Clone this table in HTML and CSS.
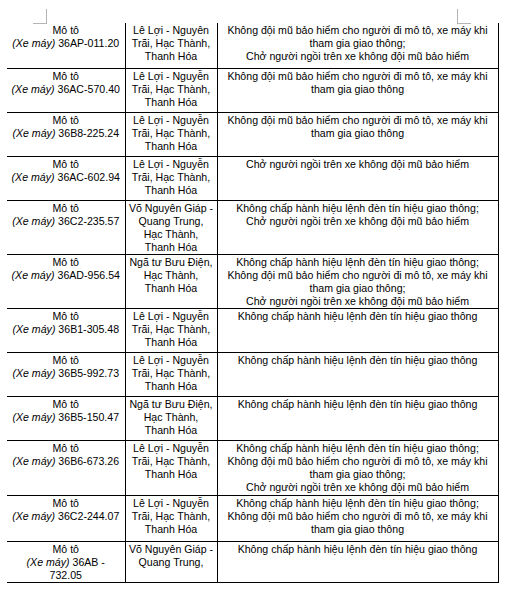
FILE: index.html
```html
<!DOCTYPE html>
<html lang="vi">
<head>
<meta charset="utf-8">
<title>Bảng vi phạm</title>
<link rel="stylesheet" href="styles.css">
</head>
<body>
<div class="page">
  <span class="crop crop-left"></span>
  <span class="crop crop-right"></span>
  <table class="grid">
    <colgroup><col class="c1"><col class="c2"><col class="c3"></colgroup>
    <tr class="r45">
      <td>Mô tô<br><i>(Xe máy)</i> 36AP-011.20</td>
      <td>Lê Lợi - Nguyên<br>Trãi, Hạc Thành,<br>Thanh Hóa</td>
      <td>Không đội mũ bảo hiểm cho người đi mô tô, xe máy khi<br>tham gia giao thông;<br>Chở người ngồi trên xe không đội mũ bảo hiểm</td>
    </tr>
    <tr class="r44">
      <td>Mô tô<br><i>(Xe máy)</i> 36AC-570.40</td>
      <td>Lê Lợi - Nguyễn<br>Trãi, Hạc Thành,<br>Thanh Hóa</td>
      <td>Không đội mũ bảo hiểm cho người đi mô tô, xe máy khi<br>tham gia giao thông</td>
    </tr>
    <tr class="r44">
      <td>Mô tô<br><i>(Xe máy)</i> 36B8-225.24</td>
      <td>Lê Lợi - Nguyễn<br>Trãi, Hạc Thành,<br>Thanh Hóa</td>
      <td>Không đội mũ bảo hiểm cho người đi mô tô, xe máy khi<br>tham gia giao thông</td>
    </tr>
    <tr class="r44">
      <td>Mô tô<br><i>(Xe máy)</i> 36AC-602.94</td>
      <td>Lê Lợi - Nguyễn<br>Trãi, Hạc Thành,<br>Thanh Hóa</td>
      <td>Chở người ngồi trên xe không đội mũ bảo hiểm</td>
    </tr>
    <tr class="r53">
      <td>Mô tô<br><i>(Xe máy)</i> 36C2-235.57</td>
      <td>Võ Nguyên Giáp -<br>Quang Trung,<br>Hạc Thành,<br>Thanh Hóa</td>
      <td>Không chấp hành hiệu lệnh đèn tín hiệu giao thông;<br>Chở người ngồi trên xe không đội mũ bảo hiểm</td>
    </tr>
    <tr class="r54">
      <td>Mô tô<br><i>(Xe máy)</i> 36AD-956.54</td>
      <td>Ngã tư Bưu Điện,<br>Hạc Thành,<br>Thanh Hóa</td>
      <td>Không chấp hành hiệu lệnh đèn tín hiệu giao thông;<br>Không đội mũ bảo hiểm cho người đi mô tô, xe máy khi<br>tham gia giao thông;<br>Chở người ngồi trên xe không đội mũ bảo hiểm</td>
    </tr>
    <tr class="r44">
      <td>Mô tô<br><i>(Xe máy)</i> 36B1-305.48</td>
      <td>Lê Lợi - Nguyễn<br>Trãi, Hạc Thành,<br>Thanh Hóa</td>
      <td>Không chấp hành hiệu lệnh đèn tín hiệu giao thông</td>
    </tr>
    <tr class="r44">
      <td>Mô tô<br><i>(Xe máy)</i> 36B5-992.73</td>
      <td>Lê Lợi - Nguyễn<br>Trãi, Hạc Thành,<br>Thanh Hóa</td>
      <td>Không chấp hành hiệu lệnh đèn tín hiệu giao thông</td>
    </tr>
    <tr class="r44">
      <td>Mô tô<br><i>(Xe máy)</i> 36B5-150.47</td>
      <td>Ngã tư Bưu Điện,<br>Hạc Thành,<br>Thanh Hóa</td>
      <td>Không chấp hành hiệu lệnh đèn tín hiệu giao thông</td>
    </tr>
    <tr class="r55">
      <td>Mô tô<br><i>(Xe máy)</i> 36B6-673.26</td>
      <td>Lê Lợi - Nguyễn<br>Trãi, Hạc Thành,<br>Thanh Hóa</td>
      <td>Không chấp hành hiệu lệnh đèn tín hiệu giao thông;<br>Không đội mũ bảo hiểm cho người đi mô tô, xe máy khi<br>tham gia giao thông;<br>Chở người ngồi trên xe không đội mũ bảo hiểm</td>
    </tr>
    <tr class="r46">
      <td>Mô tô<br><i>(Xe máy)</i> 36C2-244.07</td>
      <td>Lê Lợi - Nguyễn<br>Trãi, Hạc Thành,<br>Thanh Hóa</td>
      <td>Không chấp hành hiệu lệnh đèn tín hiệu giao thông;<br>Không đội mũ bảo hiểm cho người đi mô tô, xe máy khi<br>tham gia giao thông</td>
    </tr>
    <tr class="r41">
      <td>Mô tô<br><i>(Xe máy)</i> 36AB -<br>732.05</td>
      <td>Võ Nguyên Giáp -<br>Quang Trung,</td>
      <td>Không chấp hành hiệu lệnh đèn tín hiệu giao thông</td>
    </tr>
  </table>
</div>
</body>
</html>
```

FILE: styles.css
```css
html, body {
  margin: 0;
  padding: 0;
  background: #ffffff;
}

.page {
  position: relative;
  width: 511px;
  height: 589px;
  padding: 23px 0 0 7px;
  box-sizing: border-box;
  font-family: "Liberation Sans", Arial, sans-serif;
  font-size: 10.6px;
  line-height: 13px;
  color: #000;
}

.crop {
  position: absolute;
  top: 9px;
  width: 13px;
  height: 14px;
  border-color: #b4b4b4;
  border-style: solid;
  border-width: 0;
}

.crop-left {
  left: 33px;
  border-right-width: 1px;
  border-bottom-width: 1px;
}

.crop-right {
  left: 457px;
  border-left-width: 1px;
  border-bottom-width: 1px;
}

.grid {
  border-collapse: collapse;
  table-layout: fixed;
  width: 491px;
}

.c1 { width: 118px; }
.c2 { width: 92px; }
.c3 { width: 281px; }

.grid td {
  vertical-align: top;
  text-align: center;
  padding: 1px 2px 0 2px;
  border-bottom: 1px solid #000;
  border-left: 1px solid #000;
  border-right: 1px solid #000;
  white-space: nowrap;
  overflow: hidden;
}

.grid td:first-child {
  border-left: none;
}

.grid i {
  font-style: italic;
}

.r41 { height: 41px; }
.r44 { height: 44px; }
.r45 { height: 45px; }
.r46 { height: 46px; }
.r53 { height: 53px; }
.r54 { height: 54px; }
.r55 { height: 55px; }
```
